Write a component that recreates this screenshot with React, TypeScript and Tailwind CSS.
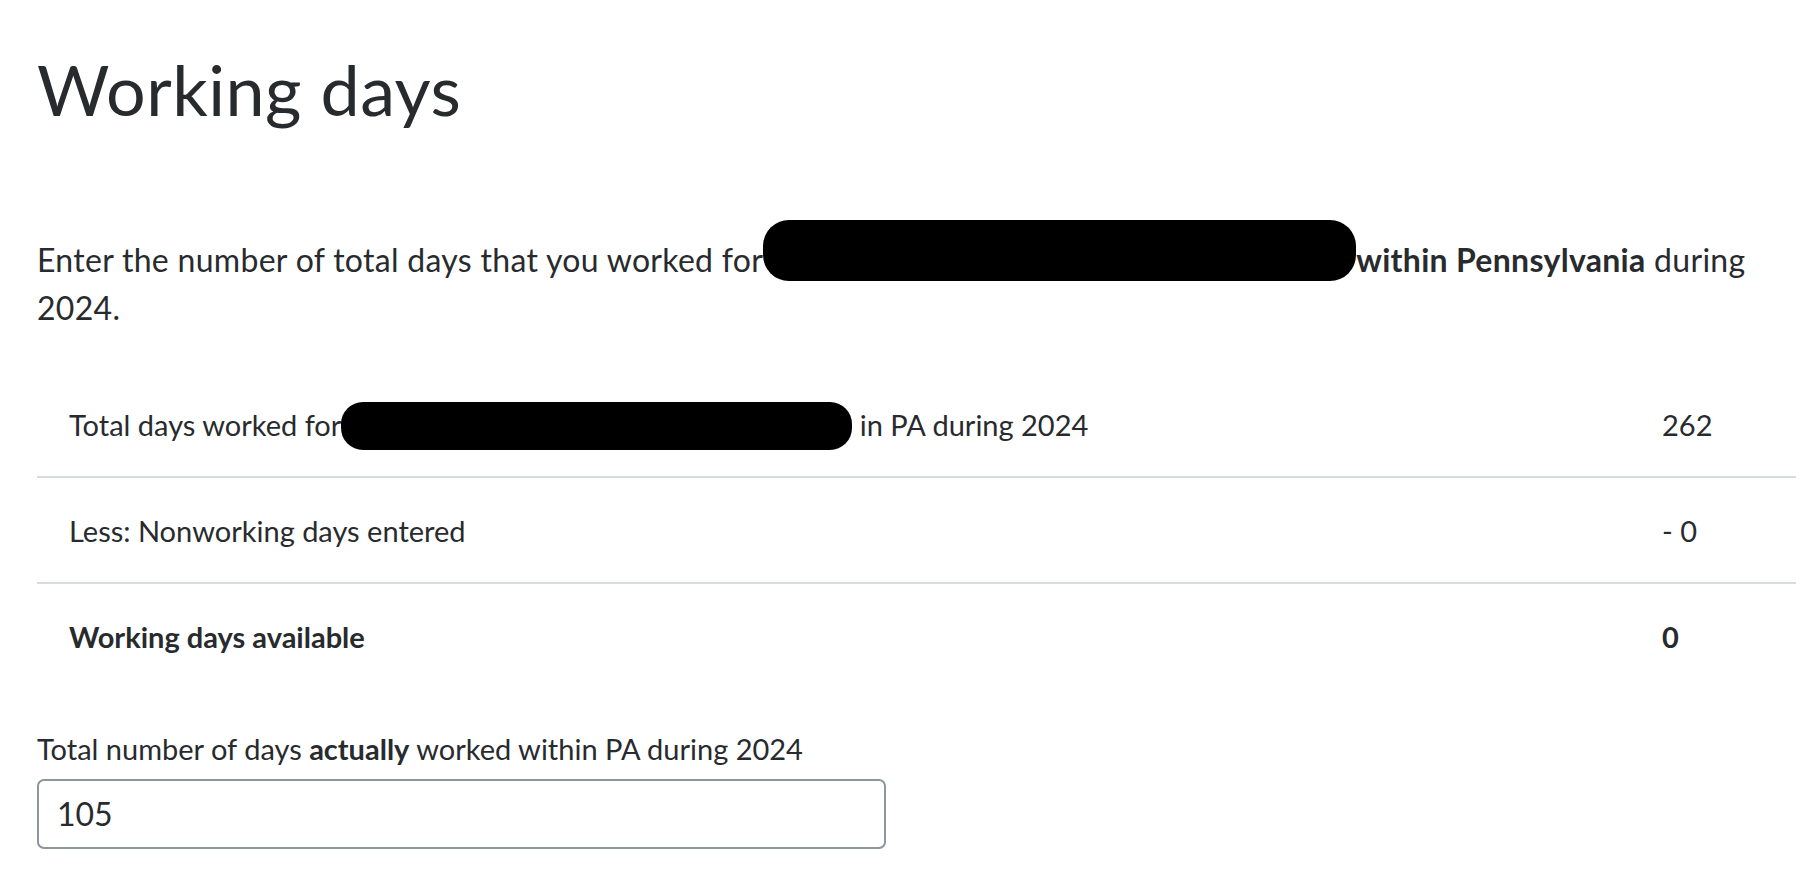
import React from "react";

export default function App() {
  return (
    <div className="min-h-screen bg-white font-['Lato','Liberation_Sans',sans-serif] text-[#282b2e] pl-[37px] pr-[10px] pt-[47px]">
      <h1 className="text-[70px] leading-[84px] font-normal tracking-[0.5px]">Working days</h1>

      <p className="mt-[105px] text-[32px] leading-[48px] tracking-[0.3px]">
        Enter the number of total days that you worked for
        <span className="inline-block w-[593px] h-[61px] -my-[30px] align-[21px] rounded-[26px] bg-black" />
        <span className="font-bold">within Pennsylvania</span> during 2024.
      </p>

      <div className="mt-[40px] text-[29px]">
        <div className="flex items-center h-[106px] border-b-2 border-[#d6dde1]">
          <div className="flex-1 pl-[32px] leading-[35px]">
            Total days worked for
            <span className="inline-block w-[511px] h-[48px] -my-[24px] align-[10px] rounded-[22px] bg-black" /> in PA during 2024
          </div>
          <div className="w-[134px] leading-[35px]">262</div>
        </div>
        <div className="flex items-center h-[106px] border-b-2 border-[#d6dde1]">
          <div className="flex-1 pl-[32px] leading-[35px]">Less: Nonworking days entered</div>
          <div className="w-[134px] leading-[35px]">- 0</div>
        </div>
        <div className="flex items-center h-[104px] font-bold">
          <div className="flex-1 pl-[32px] leading-[35px]">Working days available</div>
          <div className="w-[134px] leading-[35px]">0</div>
        </div>
      </div>

      <label className="block mt-[43px] text-[29px] leading-[35px]">
        Total number of days <span className="font-bold">actually</span> worked within PA during 2024
      </label>
      <div className="mt-[13px] w-[849px] h-[70px] border-2 border-[#8c969c] rounded-[7px] flex items-center pl-[18px] text-[32px]">
        105
      </div>
    </div>
  );
}
